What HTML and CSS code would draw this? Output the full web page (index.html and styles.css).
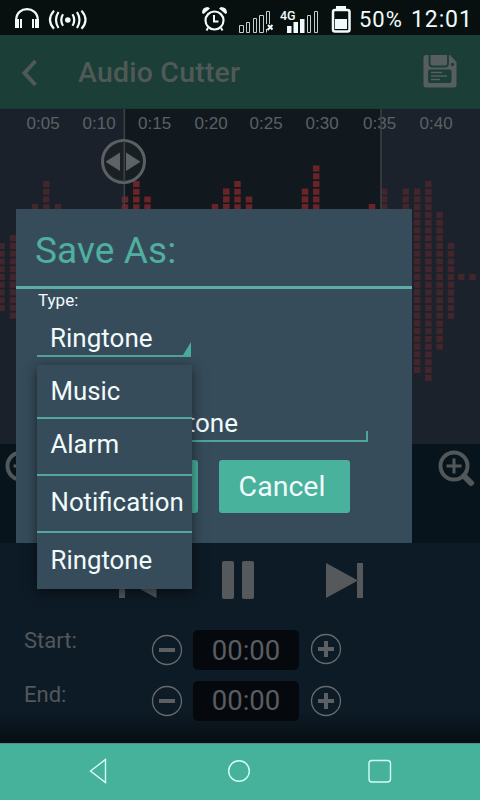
FILE: index.html
```html
<!DOCTYPE html>
<html lang="en">
<head>
<meta charset="utf-8">
<title>Audio Cutter</title>
<link rel="stylesheet" href="styles.css">
</head>
<body>
<div class="screen">
  <div class="status">
    <svg class="status-icons" width="355" height="35" viewBox="0 0 355 35">
      <g fill="none" stroke="#f2fbfb" stroke-width="2.2">
        <path d="M16.2 24V20C16.2 5.500 37.800 5.500 37.800 20V24"/>
        <path d="M63 14.200Q59.500 20 63 25.800M58.500 12Q53.500 20 58.500 28M54 10.600Q46 20 54 28.800M72.500 14.200Q76 20 72.500 25.800M77 12Q82 20 77 28M81.500 10.600Q89.500 20 81.500 28.800"/>
        <circle cx="214.500" cy="20.500" r="9"/>
        <path d="M214 15V21.500H218.500M208 28L206.500 30.500M221 28L222.500 30.500" stroke-width="2"/>
      </g>
      <g fill="#f2fbfb">
        <path d="M15 19H19V28H15zM20 19H22V28H20zM32 19H34V28H32zM35 19H39V28H35z"/>
        <circle cx="67.800" cy="20" r="2.800"/>
        <path d="M202 13Q202 7 208 7L210 8.500L203.500 14zM227 13Q227 7 221 7L219 8.500L225.500 14z"/>
        <path d="M287 26H291.500V33H287zM293.500 22H298V33H293.500zM300 19H304.500V33H300z"/>
        <path d="M336 6H346V10H336zM335 19H347V29H335z"/>
      </g>
      <g fill="none" stroke="#c5cccc" stroke-width="1">
        <path d="M239.500 25.500H243.500V32.500H239.500zM246.500 22.500H249.500V32.500H246.500zM253.500 18.500H256.500V32.500H253.500zM259.500 15.500H263.500V32.500H259.500zM266.500 24V11.500H269.500V24M266.500 29V32.500M307.500 15.500H310.500V32.500H307.500zM314.500 11.500H317.500V32.500H314.500z"/>
      </g>
      <path d="M268 25L272.500 29.500M272.500 25L267.500 30" stroke="#f2fbfb" stroke-width="2"/>
      <rect x="333" y="10" width="16.500" height="21.500" rx="2" fill="none" stroke="#f2fbfb" stroke-width="2.500"/>
      <text class="net" x="280" y="19.500">4G</text>
    </svg>
    <span class="battery">50%</span><span class="clock">12:01</span>
  </div>

  <div class="header">
    <svg class="back" width="20" height="30" viewBox="0 0 20 30"><path d="M16.500 3L5.500 15L16.500 27" fill="none" stroke="#4f5a58" stroke-width="4"/></svg>
    <h1>Audio Cutter</h1>
    <svg class="save" width="34" height="33" viewBox="0 0 34 33">
      <path fill="#565e5e" d="M3 0H27L33.500 7V30Q33.500 32.500 31 32.500H3Q.5 32.500 .5 30V3Q.5 0 3 0z"/>
      <path d="M6.500 0V8.500Q6.500 11.500 9.500 11.500H22Q25 11.500 25 8.500V0" fill="none" stroke="#1b3e36" stroke-width="1.800"/>
      <rect x="5" y="14.500" width="23.500" height="13.500" rx="2" fill="#1b3e36"/>
      <path d="M8 17.500H19M8 21H24M8 24.500H17" stroke="#565e5e" stroke-width="1.600"/>
      <circle cx="29.500" cy="9.500" r="1.700" fill="#1b3e36"/>
    </svg>
  </div>

  <div class="wave">
    <div class="times"><span>0:05</span><span>0:10</span><span>0:15</span><span>0:20</span><span>0:25</span><span>0:30</span><span>0:35</span><span>0:40</span></div>
    <svg class="plot" width="480" height="309" viewBox="0 135 480 309">
      <g class="bars dim">
        <path d="M1.500 242.900V311.100M13 235.100V318.900M35 204.100V349.900M46.300 180.900V373.100M58 204.100V349.900M384 188.600V365.400M405.800 188.600V365.400M417.200 188.600V373.100M428.400 180.900V380.900M439.700 211.900V349.900M451 242.900V318.900M461.300 273.900V280.100M472.500 273.900V280.100"/>
      </g>
      <g class="bars lit">
        <path d="M125 196.400V357.600M136.300 180.900V373.100M147.500 196.400V357.600M215 204.100V349.900M226.300 188.600V365.400M237.500 180.900V373.100M249 196.400V357.600M305 188.600V365.400M316.200 165.400V388.600M372 204.100V349.900"/>
      </g>
      <path d="M124.300 109V444M381 109V444" stroke="#3a4043" stroke-width="1.600"/>
      <circle cx="123.500" cy="161.500" r="21" fill="#1a2025" fill-opacity=".8" stroke="#5b6063" stroke-width="3"/>
      <path d="M124.300 141V182" stroke="#3a4043" stroke-width="1.600"/>
      <path d="M105.500 161.700L120 152.500V171zM140.500 161.700L126 152.500V171z" fill="#5e6366"/>
    </svg>
  </div>

  <div class="zoom">
    <svg width="40" height="42" viewBox="0 0 40 42"><g fill="none" stroke="#52585a" stroke-width="4"><circle cx="18" cy="18" r="13.500"/><path d="M10.500 18H25.500M18 10.500V25.500" stroke-width="3"/><path d="M28 28L35 35" stroke-width="6" stroke-linecap="round"/></g></svg>
    <svg width="40" height="42" viewBox="0 0 40 42"><g fill="none" stroke="#52585a" stroke-width="4"><circle cx="18" cy="18" r="13.500"/><path d="M10.500 18H25.500M18 10.500V25.500" stroke-width="3"/><path d="M28 28L35 35" stroke-width="6" stroke-linecap="round"/></g></svg>
  </div>

  <div class="controls">
    <div class="transport">
      <svg width="38" height="38" viewBox="0 0 38 38"><path fill="#56595b" d="M0 2H6V37H0zM5 19.500L37.500 2V37z"/></svg>
      <svg width="32" height="38" viewBox="0 0 32 38"><g fill="#56595b"><rect width="12" height="38" rx="2"/><rect x="20" width="12" height="38" rx="2"/></g></svg>
      <svg width="38" height="38" viewBox="0 0 38 38"><path fill="#56595b" d="M31 2H37V37H31zM32 19.500L0 2V37z"/></svg>
    </div>
    <div class="row">
      <span class="label">Start:</span>
      <svg class="round" viewBox="0 0 32 32"><circle cx="16" cy="16" r="14.500"/><path d="M8 16H24"/></svg>
      <span class="value">00:00</span>
      <svg class="round plus" viewBox="0 0 32 32"><circle cx="16" cy="16" r="14.500"/><path d="M8 16H24M16 8V24"/></svg>
    </div>
    <div class="row end">
      <span class="label">End:</span>
      <svg class="round" viewBox="0 0 32 32"><circle cx="16" cy="16" r="14.500"/><path d="M8 16H24"/></svg>
      <span class="value">00:00</span>
      <svg class="round" viewBox="0 0 32 32"><circle cx="16" cy="16" r="14.500"/><path d="M8 16H24M16 8V24"/></svg>
    </div>
  </div>

  <div class="nav">
    <svg width="24" height="28" viewBox="0 0 24 28"><path d="M4.500 14L19.500 2.500V25.500z"/></svg>
    <svg width="24" height="28" viewBox="0 0 24 28"><circle cx="12" cy="14" r="10.300"/></svg>
    <svg width="24" height="28" viewBox="0 0 24 28"><rect x="1" y="3.500" width="21.500" height="21.500" rx="3"/></svg>
  </div>

  <div class="dialog">
    <h2>Save As:</h2>
    <div class="type">Type:</div>
    <div class="select"><span>Ringtone</span><svg width="8" height="13" viewBox="0 0 8 13"><path d="M8 0V13H0z" fill="#4aac9b"/></svg></div>
    <div class="field"><span>Ringtone</span></div>
    <div class="buttons"><div class="btn"></div><div class="btn">Cancel</div></div>
  </div>

  <div class="menu">
    <div class="item music">Music</div>
    <div class="item alarm">Alarm</div>
    <div class="item notif">Notification</div>
    <div class="item ring">Ringtone</div>
  </div>
</div>
</body>
</html>
```
FILE: styles.css
```css
* { box-sizing: border-box; }
body { margin: 0; background: #0d1b26; font-family: Roboto, "Liberation Sans", sans-serif; }
svg { display: block; flex: none; }
.screen { position: relative; width: 480px; height: 800px; display: flex; flex-direction: column; overflow: hidden; }

.status { height: 35px; background: #07100f; display: flex; color: #f2fbfb; line-height: 40px; white-space: nowrap; }
.net { font: 500 12.5px Roboto, sans-serif; fill: #f2fbfb; }
.battery { width: 56px; padding-left: 4px; font-size: 22px; letter-spacing: 1px; }
.clock { font-size: 23px; letter-spacing: .9px; line-height: 39px; }

.header { height: 74px; background: #1b3e36; display: flex; align-items: flex-start; border-bottom: 1px solid #173a31; }
.back { margin: 22.500px 0 0 19px; }
.header h1 { margin: 18px 0 0 39px; width: 345px; font-size: 28.500px; font-weight: 500; line-height: 40px; color: #4f5a58; letter-spacing: .2px; }
.save { margin-top: 19.500px; }

.wave { height: 335px; background: linear-gradient(90deg, #1b212b 124px, #11191f 124px, #11191f 381px, #1c222b 381px); }
.times { height: 26px; padding-left: 26.500px; display: grid; grid-template-columns: 56px 55.500px 56.500px 55px 56px 57.500px 56.500px 40px; font: 17px/30px "Liberation Sans", sans-serif; color: #5b6165; }
.plot { overflow: visible; }
.bars { fill: none; stroke-width: 6.500; stroke-dasharray: 6.200 1.550; }
.dim { stroke: #42262b; }
.lit { stroke: #6a2428; }

.zoom { height: 99px; background: #07141c; display: flex; justify-content: space-between; padding: 4px 4.500px 0 2.500px; }

.controls { height: 200px; background: linear-gradient(#0d1b26 0, #0d1b26 168px, #070e13 198px); }
.transport { height: 87px; display: flex; padding: 18px 0 0 119px; gap: 65px; }
.transport svg + svg + svg { margin-left: 7px; }
.row { height: 40px; display: flex; align-items: center; padding-left: 24px; }
.row.end { margin-top: 11px; }
.label { width: 127px; height: 40px; font-size: 22px; line-height: 21px; color: #53585b; }
.end .label { line-height: 27px; }
.round { width: 32px; height: 32px; fill: none; stroke: #666a6d; stroke-width: 1.300; }
.round path { stroke: #5d6062; stroke-width: 4; }
.plus { position: relative; top: -1px; }
.value { width: 106px; height: 40px; margin: 0 11px 0 10px; border-radius: 5px; background: #05090e; color: #5a5d60; font-size: 27.500px; line-height: 41px; text-align: center; }
.end .value { line-height: 39px; }

.nav { height: 57px; background: #47b29b; border-top: 1px solid #529083; display: flex; align-items: center; padding: 0 0 3px 86px; gap: 117px; }
.nav svg { fill: none; stroke: #d3fff5; stroke-width: 1.400; }

.dialog { position: absolute; left: 16px; top: 209px; width: 396px; height: 334px; background: #364c5b; color: #f2fbfc; }
.dialog h2 { margin: 0; height: 80px; padding-left: 19px; border-bottom: 3px solid #5aaea3; font-size: 37px; font-weight: 400; line-height: 84px; letter-spacing: .1px; color: #4fb09f; }
.type { height: 25px; padding-left: 22px; font-size: 17px; line-height: 23px; }
.select { width: 154px; height: 43px; margin-left: 21px; padding-left: 13px; border-bottom: 2px solid #4fa598; display: flex; align-items: flex-end; justify-content: space-between; font-size: 26px; }
.select span { line-height: 34px; }
.field { width: 331px; height: 85px; margin-left: 21px; border-bottom: 2px solid #4fa598; padding-top: 48px; background: linear-gradient(#4fa598, #4fa598) right bottom / 2px 9px no-repeat; }
.field span { display: block; width: 201px; text-align: right; font-size: 26px; line-height: 36px; }
.buttons { display: flex; gap: 21px; padding: 18px 0 0 51px; }
.btn { width: 131px; height: 53px; border-radius: 3px; background: #48b29c; text-align: center; font-size: 28.500px; line-height: 54px; padding-right: 5px; }

.menu { position: absolute; left: 37px; top: 365px; width: 155px; height: 224px; background: #364c5b; box-shadow: 0 3px 12px rgba(0, 0, 0, .55); color: #f2fbfc; }
.item { height: 57px; padding-left: 13.500px; border-bottom: 2px solid #55a79c; font-size: 25.800px; line-height: 53px; white-space: nowrap; }
.music { height: 54px; }
.alarm { line-height: 50px; }
.notif { height: 57px; }
.ring { border-bottom: 0; height: 56px; line-height: 54px; }
```
